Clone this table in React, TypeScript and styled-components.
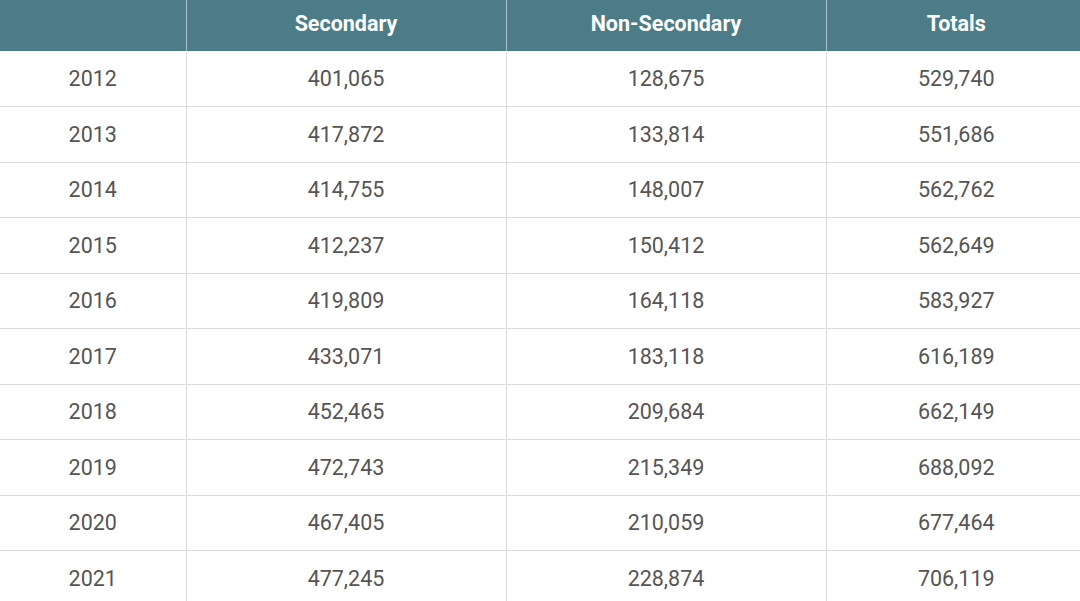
import React, { FC } from 'react';
import styled, { createGlobalStyle } from 'styled-components';

const columns: { title: string; width: number }[] = [
	{ title: '', width: 186 },
	{ title: 'Secondary', width: 320 },
	{ title: 'Non-Secondary', width: 320 },
	{ title: 'Totals', width: 260 },
];

const rows: [string, string, string, string][] = [
	['2012', '401,065', '128,675', '529,740'],
	['2013', '417,872', '133,814', '551,686'],
	['2014', '414,755', '148,007', '562,762'],
	['2015', '412,237', '150,412', '562,649'],
	['2016', '419,809', '164,118', '583,927'],
	['2017', '433,071', '183,118', '616,189'],
	['2018', '452,465', '209,684', '662,149'],
	['2019', '472,743', '215,349', '688,092'],
	['2020', '467,405', '210,059', '677,464'],
	['2021', '477,245', '228,874', '706,119'],
];

const GlobalStyle = createGlobalStyle`
	html, body {
		margin: 0;
		padding: 0;
		background: #ffffff;
		overflow: hidden;
	}
`;

const App: FC = () => (
	<>
		<GlobalStyle />
		<Table>
			<colgroup>
				{columns.map((c) => (
					<Col key={c.title} $width={c.width} />
				))}
			</colgroup>
			<thead>
				<tr>
					{columns.map((c) => (
						<HeadCell key={c.title}>{c.title}</HeadCell>
					))}
				</tr>
			</thead>
			<tbody>
				{rows.map((row) => (
					<Row key={row[0]}>
						{row.map((v, i) => (
							<Cell key={i}>{v}</Cell>
						))}
					</Row>
				))}
			</tbody>
		</Table>
	</>
);

const Table = styled.table`
	width: 1086px;
	table-layout: fixed;
	border-collapse: collapse;
	font-family: Roboto, 'Liberation Sans', sans-serif;
`;

const Col = styled.col<{ $width: number }>`
	width: ${({ $width }) => `${$width}px`};
`;

const HeadCell = styled.th`
	height: 51px;
	padding: 0 0 5px 0;
	box-sizing: border-box;
	background: #4b7c88;
	color: #ffffff;
	font-size: 21.5px;
	font-weight: 700;
	text-align: center;
	border-left: 1px solid #a9c6cd;
	&:first-child {
		border-left: none;
	}
`;

const Row = styled.tr`
	&:nth-child(odd) {
		height: 55px;
	}
	&:nth-child(even) {
		height: 56px;
	}
`;

const Cell = styled.td`
	padding: 0;
	text-align: center;
	vertical-align: middle;
	color: #555555;
	font-size: 21.5px;
	font-weight: 400;
	border-left: 1px solid #dcdcdc;
	border-bottom: 1px solid #dcdcdc;
	&:first-child {
		border-left: none;
	}
`;

export default App;
